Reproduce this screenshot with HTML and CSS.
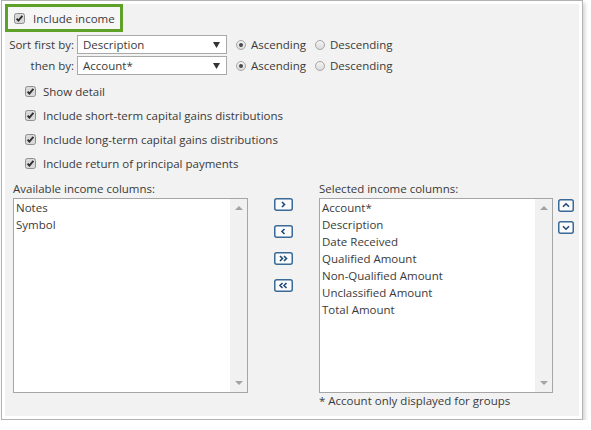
FILE: index.html
```html
<!DOCTYPE html>
<html>
<head>
<meta charset="utf-8">
<link rel="stylesheet" href="styles.css">
</head>
<body>
<div class="frame">
  <div class="panel">
    <div class="hl">
      <span class="cb"><svg width="11" height="11" viewBox="0 0 11 11"><rect x="0.5" y="0.5" width="10" height="10" rx="2" fill="#d9d9d9" stroke="#8e8e8e"/><path d="M2.6 5.6 L4.4 7.6 L8.4 2.8" fill="none" stroke="#2b2b2b" stroke-width="1.8"/></svg></span>
      <span class="hltext">Include income</span>
    </div>

    <div class="sort">
      <div class="srow">
        <span class="lbl">Sort first by:</span>
        <div class="sel"><span>Description</span><svg class="arr" width="7" height="6" viewBox="0 0 7 6"><path d="M0 0 H7 L3.5 6 Z" fill="#333"/></svg></div>
        <span class="rad on"></span><span class="rtxt">Ascending</span>
        <span class="rad"></span><span class="rtxt">Descending</span>
      </div>
      <div class="srow">
        <span class="lbl">then by:</span>
        <div class="sel"><span>Account*</span><svg class="arr" width="7" height="6" viewBox="0 0 7 6"><path d="M0 0 H7 L3.5 6 Z" fill="#333"/></svg></div>
        <span class="rad on"></span><span class="rtxt">Ascending</span>
        <span class="rad"></span><span class="rtxt">Descending</span>
      </div>
    </div>

    <div class="checks">
      <div class="crow"><span class="cb"><svg width="11" height="11" viewBox="0 0 11 11"><rect x="0.5" y="0.5" width="10" height="10" rx="2" fill="#d9d9d9" stroke="#8e8e8e"/><path d="M2.6 5.6 L4.4 7.6 L8.4 2.8" fill="none" stroke="#2b2b2b" stroke-width="1.8"/></svg></span><span>Show detail</span></div>
      <div class="crow"><span class="cb"><svg width="11" height="11" viewBox="0 0 11 11"><rect x="0.5" y="0.5" width="10" height="10" rx="2" fill="#d9d9d9" stroke="#8e8e8e"/><path d="M2.6 5.6 L4.4 7.6 L8.4 2.8" fill="none" stroke="#2b2b2b" stroke-width="1.8"/></svg></span><span>Include short-term capital gains distributions</span></div>
      <div class="crow"><span class="cb"><svg width="11" height="11" viewBox="0 0 11 11"><rect x="0.5" y="0.5" width="10" height="10" rx="2" fill="#d9d9d9" stroke="#8e8e8e"/><path d="M2.6 5.6 L4.4 7.6 L8.4 2.8" fill="none" stroke="#2b2b2b" stroke-width="1.8"/></svg></span><span>Include long-term capital gains distributions</span></div>
      <div class="crow"><span class="cb"><svg width="11" height="11" viewBox="0 0 11 11"><rect x="0.5" y="0.5" width="10" height="10" rx="2" fill="#d9d9d9" stroke="#8e8e8e"/><path d="M2.6 5.6 L4.4 7.6 L8.4 2.8" fill="none" stroke="#2b2b2b" stroke-width="1.8"/></svg></span><span>Include return of principal payments</span></div>
    </div>

    <div class="cols">
      <div class="col left">
        <div class="cap">Available income columns:</div>
        <div class="list">
          <div class="items">
            <div class="it">Notes</div>
            <div class="it">Symbol</div>
          </div>
          <div class="sb"><span class="up"></span><span class="dn"></span></div>
        </div>
      </div>

      <div class="mid">
        <svg class="btn" width="19" height="13" viewBox="0 0 19 13"><rect x="0.75" y="0.75" width="17.5" height="11.5" rx="2" fill="#fbfbfb" stroke="#3a6a98" stroke-width="1.5"/><path d="M8 4 L10.5 6.5 L8 9" fill="none" stroke="#1d4a78" stroke-width="1.6"/></svg>
        <svg class="btn" width="19" height="13" viewBox="0 0 19 13"><rect x="0.75" y="0.75" width="17.5" height="11.5" rx="2" fill="#fbfbfb" stroke="#3a6a98" stroke-width="1.5"/><path d="M10.5 4 L8 6.5 L10.5 9" fill="none" stroke="#1d4a78" stroke-width="1.6"/></svg>
        <svg class="btn" width="19" height="13" viewBox="0 0 19 13"><rect x="0.75" y="0.75" width="17.5" height="11.5" rx="2" fill="#fbfbfb" stroke="#3a6a98" stroke-width="1.5"/><path d="M6 4 L8.5 6.5 L6 9 M10 4 L12.5 6.5 L10 9" fill="none" stroke="#1d4a78" stroke-width="1.6"/></svg>
        <svg class="btn" width="19" height="13" viewBox="0 0 19 13"><rect x="0.75" y="0.75" width="17.5" height="11.5" rx="2" fill="#fbfbfb" stroke="#3a6a98" stroke-width="1.5"/><path d="M8.5 4 L6 6.5 L8.5 9 M12.5 4 L10 6.5 L12.5 9" fill="none" stroke="#1d4a78" stroke-width="1.6"/></svg>
      </div>

      <div class="col right">
        <div class="cap">Selected income columns:</div>
        <div class="list">
          <div class="items">
            <div class="it">Account*</div>
            <div class="it">Description</div>
            <div class="it">Date Received</div>
            <div class="it">Qualified Amount</div>
            <div class="it">Non-Qualified Amount</div>
            <div class="it">Unclassified Amount</div>
            <div class="it">Total Amount</div>
          </div>
          <div class="sb"><span class="up"></span><span class="dn"></span></div>
        </div>
        <div class="note">* Account only displayed for groups</div>
      </div>

      <div class="ud">
        <svg class="btn" width="16" height="13" viewBox="0 0 16 13"><rect x="0.75" y="0.75" width="14.5" height="11.5" rx="2" fill="#fbfbfb" stroke="#3a6a98" stroke-width="1.5"/><path d="M5 7.8 L8 4.8 L11 7.8" fill="none" stroke="#1d4a78" stroke-width="1.6"/></svg>
        <svg class="btn" width="16" height="13" viewBox="0 0 16 13"><rect x="0.75" y="0.75" width="14.5" height="11.5" rx="2" fill="#fbfbfb" stroke="#3a6a98" stroke-width="1.5"/><path d="M5 5.2 L8 8.2 L11 5.2" fill="none" stroke="#1d4a78" stroke-width="1.6"/></svg>
      </div>
    </div>
  </div>
</div>
</body>
</html>
```

FILE: styles.css
```css
* { box-sizing: border-box; }
body {
  margin: 0;
  background: #ffffff;
  font-family: "Open Sans", "Noto Sans", sans-serif;
  font-size: 11.5px;
  color: #3a3a3a;
}
.frame {
  margin-left: 1px;
  width: 582px;
  height: 420px;
  border: 1px solid #b3b3b3;
  padding: 3px;
  background: #ffffff;
  box-shadow: 2px 3px 4px rgba(0, 0, 0, 0.18);
}
.panel {
  background: #f2f2f2;
  height: 100%;
}
.hl {
  display: flex;
  align-items: center;
  width: 118px;
  height: 28px;
  border: 3px solid #5fa029;
  background: #f6f6f6;
  padding-left: 6px;
}
.cb { display: inline-flex; width: 11px; height: 11px; }
.cb svg { display: block; }
.hltext { margin-left: 8px; }
.sort {
  margin-top: 3px;
  display: flex;
  flex-direction: column;
  gap: 2px;
}
.srow {
  display: flex;
  align-items: center;
  height: 19px;
}
.lbl {
  width: 72px;
  text-align: right;
  padding-right: 3px;
  white-space: nowrap;
}
.sel {
  width: 150px;
  height: 19px;
  border: 1px solid #a9a9a9;
  background: #fff;
  display: flex;
  align-items: center;
  justify-content: space-between;
  padding: 0 6px 0 5px;
}
.rad {
  width: 10px;
  height: 10px;
  margin-left: 9px;
  border-radius: 50%;
  border: 1px solid #a6a6a6;
  background: linear-gradient(#f4f4f4, #dcdcdc);
  display: inline-flex;
  align-items: center;
  justify-content: center;
}
.rad.on::after {
  content: "";
  width: 4px;
  height: 4px;
  border-radius: 50%;
  background: #4a4a4a;
}
.rtxt { margin-left: 5px; }
.checks {
  margin-top: 4px;
  padding-left: 20px;
}
.crow {
  height: 24px;
  display: flex;
  align-items: center;
}
.crow .cb { margin-right: 7px; }
.cols {
  margin-top: 6px;
  display: flex;
  align-items: flex-start;
}
.cap {
  height: 16px;
  line-height: 16px;
  margin-bottom: 1px;
}
.left { margin-left: 8px; width: 235px; }
.right { width: 234px; }
.list {
  height: 195px;
  border: 1px solid #a6a6a6;
  background: #fff;
  display: flex;
}
.items {
  flex: 1;
  padding: 0 2px;
}
.it {
  height: 17px;
  line-height: 17px;
  white-space: nowrap;
}
.sb {
  width: 17px;
  background: #f1f1f1;
  display: flex;
  flex-direction: column;
  align-items: center;
  justify-content: space-between;
  padding: 7px 0 7px;
}
.up {
  width: 0; height: 0;
  border-left: 4px solid transparent;
  border-right: 4px solid transparent;
  border-bottom: 4px solid #a3a3a3;
}
.dn {
  width: 0; height: 0;
  border-left: 4px solid transparent;
  border-right: 4px solid transparent;
  border-top: 4px solid #a3a3a3;
}
.mid {
  width: 71px;
  padding-top: 17px;
  padding-left: 26px;
  display: flex;
  flex-direction: column;
  gap: 14px;
}
.btn { display: block; }
.note {
  margin-top: 0;
  line-height: 15px;
}
.ud {
  margin-left: 5px;
  padding-top: 18px;
  display: flex;
  flex-direction: column;
  gap: 9px;
}
```
